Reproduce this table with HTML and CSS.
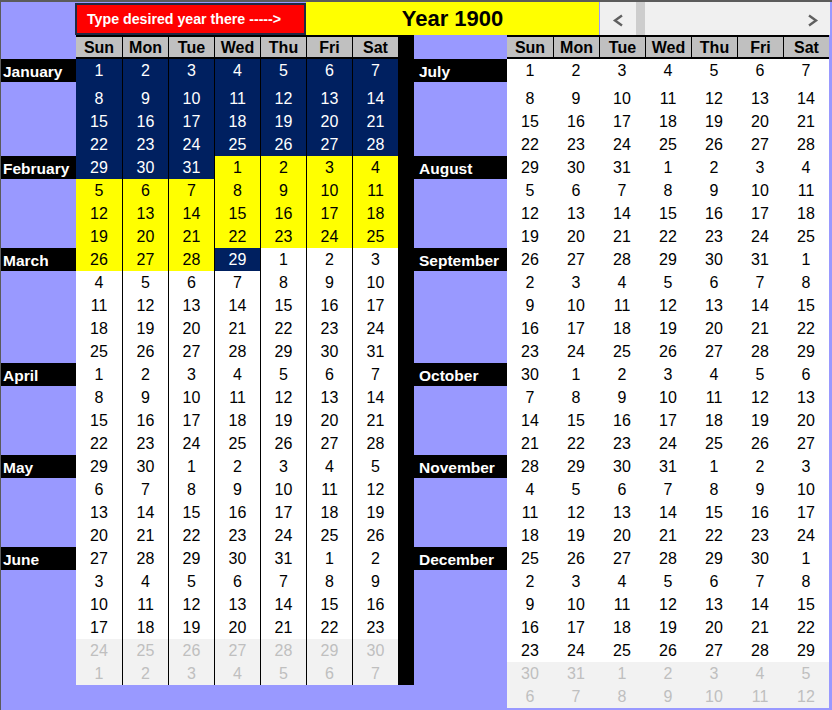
FILE: index.html
```html
<!DOCTYPE html>
<html>
<head>
<meta charset="utf-8">
<title>Year 1900</title>
<link rel="stylesheet" href="styles.css">
</head>
<body>
<div class="sheet">
  <div class="top">
    <div class="pad"></div>
    <div class="prompt">Type desired year there -----&gt;</div>
    <div class="year">Year 1900</div>
    <div class="scroll">
      <svg width="230" height="33" viewBox="0 0 230 33">
        <rect x="36" y="0" width="9" height="33" fill="#cdcdcd"/>
        <polyline points="22,13.5 15,18.5 22,23.5" fill="none" stroke="#606060" stroke-width="2.4"/>
        <polyline points="209,13.5 216,18.5 209,23.5" fill="none" stroke="#606060" stroke-width="2.4"/>
      </svg>
    </div>
  </div>
  <div class="main">
    <div class="half left">
      <div class="bar"></div>
      <div class="e"></div><div class="hd">Sun</div><div class="hd">Mon</div><div class="hd">Tue</div><div class="hd">Wed</div><div class="hd">Thu</div><div class="hd">Fri</div><div class="hd">Sat</div>
      <div class="mo">January</div><div class="d n">1</div><div class="d n">2</div><div class="d n">3</div><div class="d n">4</div><div class="d n">5</div><div class="d n">6</div><div class="d n">7</div>
      <div class="e"></div><div class="d n">8</div><div class="d n">9</div><div class="d n">10</div><div class="d n">11</div><div class="d n">12</div><div class="d n">13</div><div class="d n">14</div>
      <div class="e"></div><div class="d n">15</div><div class="d n">16</div><div class="d n">17</div><div class="d n">18</div><div class="d n">19</div><div class="d n">20</div><div class="d n">21</div>
      <div class="e"></div><div class="d n">22</div><div class="d n">23</div><div class="d n">24</div><div class="d n">25</div><div class="d n">26</div><div class="d n">27</div><div class="d n">28</div>
      <div class="mo">February</div><div class="d n">29</div><div class="d n">30</div><div class="d n">31</div><div class="d y">1</div><div class="d y">2</div><div class="d y">3</div><div class="d y">4</div>
      <div class="e"></div><div class="d y">5</div><div class="d y">6</div><div class="d y">7</div><div class="d y">8</div><div class="d y">9</div><div class="d y">10</div><div class="d y">11</div>
      <div class="e"></div><div class="d y">12</div><div class="d y">13</div><div class="d y">14</div><div class="d y">15</div><div class="d y">16</div><div class="d y">17</div><div class="d y">18</div>
      <div class="e"></div><div class="d y">19</div><div class="d y">20</div><div class="d y">21</div><div class="d y">22</div><div class="d y">23</div><div class="d y">24</div><div class="d y">25</div>
      <div class="mo">March</div><div class="d y">26</div><div class="d y">27</div><div class="d y">28</div><div class="d n">29</div><div class="d">1</div><div class="d">2</div><div class="d">3</div>
      <div class="e"></div><div class="d">4</div><div class="d">5</div><div class="d">6</div><div class="d">7</div><div class="d">8</div><div class="d">9</div><div class="d">10</div>
      <div class="e"></div><div class="d">11</div><div class="d">12</div><div class="d">13</div><div class="d">14</div><div class="d">15</div><div class="d">16</div><div class="d">17</div>
      <div class="e"></div><div class="d">18</div><div class="d">19</div><div class="d">20</div><div class="d">21</div><div class="d">22</div><div class="d">23</div><div class="d">24</div>
      <div class="e"></div><div class="d">25</div><div class="d">26</div><div class="d">27</div><div class="d">28</div><div class="d">29</div><div class="d">30</div><div class="d">31</div>
      <div class="mo">April</div><div class="d">1</div><div class="d">2</div><div class="d">3</div><div class="d">4</div><div class="d">5</div><div class="d">6</div><div class="d">7</div>
      <div class="e"></div><div class="d">8</div><div class="d">9</div><div class="d">10</div><div class="d">11</div><div class="d">12</div><div class="d">13</div><div class="d">14</div>
      <div class="e"></div><div class="d">15</div><div class="d">16</div><div class="d">17</div><div class="d">18</div><div class="d">19</div><div class="d">20</div><div class="d">21</div>
      <div class="e"></div><div class="d">22</div><div class="d">23</div><div class="d">24</div><div class="d">25</div><div class="d">26</div><div class="d">27</div><div class="d">28</div>
      <div class="mo">May</div><div class="d">29</div><div class="d">30</div><div class="d">1</div><div class="d">2</div><div class="d">3</div><div class="d">4</div><div class="d">5</div>
      <div class="e"></div><div class="d">6</div><div class="d">7</div><div class="d">8</div><div class="d">9</div><div class="d">10</div><div class="d">11</div><div class="d">12</div>
      <div class="e"></div><div class="d">13</div><div class="d">14</div><div class="d">15</div><div class="d">16</div><div class="d">17</div><div class="d">18</div><div class="d">19</div>
      <div class="e"></div><div class="d">20</div><div class="d">21</div><div class="d">22</div><div class="d">23</div><div class="d">24</div><div class="d">25</div><div class="d">26</div>
      <div class="mo">June</div><div class="d">27</div><div class="d">28</div><div class="d">29</div><div class="d">30</div><div class="d">31</div><div class="d">1</div><div class="d">2</div>
      <div class="e"></div><div class="d">3</div><div class="d">4</div><div class="d">5</div><div class="d">6</div><div class="d">7</div><div class="d">8</div><div class="d">9</div>
      <div class="e"></div><div class="d">10</div><div class="d">11</div><div class="d">12</div><div class="d">13</div><div class="d">14</div><div class="d">15</div><div class="d">16</div>
      <div class="e"></div><div class="d">17</div><div class="d">18</div><div class="d">19</div><div class="d">20</div><div class="d">21</div><div class="d">22</div><div class="d">23</div>
      <div class="e"></div><div class="d g">24</div><div class="d g">25</div><div class="d g">26</div><div class="d g">27</div><div class="d g">28</div><div class="d g">29</div><div class="d g">30</div>
      <div class="e"></div><div class="d g">1</div><div class="d g">2</div><div class="d g">3</div><div class="d g">4</div><div class="d g">5</div><div class="d g">6</div><div class="d g">7</div>
    </div>
    <div class="half right">
      <div class="e"></div><div class="hd">Sun</div><div class="hd">Mon</div><div class="hd">Tue</div><div class="hd">Wed</div><div class="hd">Thu</div><div class="hd">Fri</div><div class="hd">Sat</div>
      <div class="mo">July</div><div class="d">1</div><div class="d">2</div><div class="d">3</div><div class="d">4</div><div class="d">5</div><div class="d">6</div><div class="d">7</div>
      <div class="e"></div><div class="d">8</div><div class="d">9</div><div class="d">10</div><div class="d">11</div><div class="d">12</div><div class="d">13</div><div class="d">14</div>
      <div class="e"></div><div class="d">15</div><div class="d">16</div><div class="d">17</div><div class="d">18</div><div class="d">19</div><div class="d">20</div><div class="d">21</div>
      <div class="e"></div><div class="d">22</div><div class="d">23</div><div class="d">24</div><div class="d">25</div><div class="d">26</div><div class="d">27</div><div class="d">28</div>
      <div class="mo">August</div><div class="d">29</div><div class="d">30</div><div class="d">31</div><div class="d">1</div><div class="d">2</div><div class="d">3</div><div class="d">4</div>
      <div class="e"></div><div class="d">5</div><div class="d">6</div><div class="d">7</div><div class="d">8</div><div class="d">9</div><div class="d">10</div><div class="d">11</div>
      <div class="e"></div><div class="d">12</div><div class="d">13</div><div class="d">14</div><div class="d">15</div><div class="d">16</div><div class="d">17</div><div class="d">18</div>
      <div class="e"></div><div class="d">19</div><div class="d">20</div><div class="d">21</div><div class="d">22</div><div class="d">23</div><div class="d">24</div><div class="d">25</div>
      <div class="mo">September</div><div class="d">26</div><div class="d">27</div><div class="d">28</div><div class="d">29</div><div class="d">30</div><div class="d">31</div><div class="d">1</div>
      <div class="e"></div><div class="d">2</div><div class="d">3</div><div class="d">4</div><div class="d">5</div><div class="d">6</div><div class="d">7</div><div class="d">8</div>
      <div class="e"></div><div class="d">9</div><div class="d">10</div><div class="d">11</div><div class="d">12</div><div class="d">13</div><div class="d">14</div><div class="d">15</div>
      <div class="e"></div><div class="d">16</div><div class="d">17</div><div class="d">18</div><div class="d">19</div><div class="d">20</div><div class="d">21</div><div class="d">22</div>
      <div class="e"></div><div class="d">23</div><div class="d">24</div><div class="d">25</div><div class="d">26</div><div class="d">27</div><div class="d">28</div><div class="d">29</div>
      <div class="mo">October</div><div class="d">30</div><div class="d">1</div><div class="d">2</div><div class="d">3</div><div class="d">4</div><div class="d">5</div><div class="d">6</div>
      <div class="e"></div><div class="d">7</div><div class="d">8</div><div class="d">9</div><div class="d">10</div><div class="d">11</div><div class="d">12</div><div class="d">13</div>
      <div class="e"></div><div class="d">14</div><div class="d">15</div><div class="d">16</div><div class="d">17</div><div class="d">18</div><div class="d">19</div><div class="d">20</div>
      <div class="e"></div><div class="d">21</div><div class="d">22</div><div class="d">23</div><div class="d">24</div><div class="d">25</div><div class="d">26</div><div class="d">27</div>
      <div class="mo">November</div><div class="d">28</div><div class="d">29</div><div class="d">30</div><div class="d">31</div><div class="d">1</div><div class="d">2</div><div class="d">3</div>
      <div class="e"></div><div class="d">4</div><div class="d">5</div><div class="d">6</div><div class="d">7</div><div class="d">8</div><div class="d">9</div><div class="d">10</div>
      <div class="e"></div><div class="d">11</div><div class="d">12</div><div class="d">13</div><div class="d">14</div><div class="d">15</div><div class="d">16</div><div class="d">17</div>
      <div class="e"></div><div class="d">18</div><div class="d">19</div><div class="d">20</div><div class="d">21</div><div class="d">22</div><div class="d">23</div><div class="d">24</div>
      <div class="mo">December</div><div class="d">25</div><div class="d">26</div><div class="d">27</div><div class="d">28</div><div class="d">29</div><div class="d">30</div><div class="d">1</div>
      <div class="e"></div><div class="d">2</div><div class="d">3</div><div class="d">4</div><div class="d">5</div><div class="d">6</div><div class="d">7</div><div class="d">8</div>
      <div class="e"></div><div class="d">9</div><div class="d">10</div><div class="d">11</div><div class="d">12</div><div class="d">13</div><div class="d">14</div><div class="d">15</div>
      <div class="e"></div><div class="d">16</div><div class="d">17</div><div class="d">18</div><div class="d">19</div><div class="d">20</div><div class="d">21</div><div class="d">22</div>
      <div class="e"></div><div class="d">23</div><div class="d">24</div><div class="d">25</div><div class="d">26</div><div class="d">27</div><div class="d">28</div><div class="d">29</div>
      <div class="e"></div><div class="d g">30</div><div class="d g">31</div><div class="d g">1</div><div class="d g">2</div><div class="d g">3</div><div class="d g">4</div><div class="d g">5</div>
      <div class="e"></div><div class="d g">6</div><div class="d g">7</div><div class="d g">8</div><div class="d g">9</div><div class="d g">10</div><div class="d g">11</div><div class="d g">12</div>
    </div>
  </div>
</div>
</body>
</html>
```

FILE: styles.css
```css
* { box-sizing: border-box; }
html, body { margin: 0; padding: 0; }
html { background: #9999ff; }
body { font-family: "Liberation Sans", Arial, sans-serif; color: #000; }

.sheet {
  height: 710px;
  border-top: 2px solid #5b5b5b;
  border-left: 1px solid #5b5b5b;
  background: #9999ff;
  overflow: hidden;
}

.top { display: flex; height: 33px; }
.pad { width: 74px; flex: none; }
.prompt {
  flex: none;
  width: 231px;
  height: 32px;
  margin-top: 1px;
  border: 2px solid #1f2a44;
  background: #ff0000;
  color: #fff;
  font-weight: bold;
  font-size: 14.2px;
  display: flex;
  align-items: center;
  padding-left: 10px;
  white-space: nowrap;
}
.year {
  flex: none;
  width: 293px;
  background: #ffff00;
  display: flex;
  align-items: center;
  justify-content: center;
  font-weight: bold;
  font-size: 22px;
}
.scroll { flex: none; width: 230px; margin-left: 1px; background: #f0f0f0; }
.scroll svg { display: block; }

.main { display: flex; align-items: flex-start; }
.half { display: grid; }
.left {
  grid-template-columns: 75px repeat(7, 46px) 16px;
  grid-template-rows: 24px 23px 28px repeat(25, 23px);
}
.right {
  grid-template-columns: 93px repeat(7, 46px);
  grid-template-rows: 24px 23px 28px repeat(26, 23px);
}
.bar { grid-column: 9; grid-row: 1 / -1; background: #000; }

.hd {
  background: #c0c0c0;
  border-top: 2px solid #000;
  border-bottom: 2px solid #000;
  font-weight: bold;
  font-size: 16px;
  line-height: 22px;
  text-align: center;
}
.hd + .hd { border-left: 1px solid #000; }

.d {
  background: #fff;
  font-size: 16px;
  line-height: 22px;
  display: flex;
  align-items: flex-end;
  justify-content: center;
}
.left .d + .d { border-left: 1px solid #000; }
.n { background: #002060; color: #fff; }
.y { background: #ffff00; }
.g { background: #f2f2f2; color: #bfbfbf; }

.mo {
  background: #000;
  color: #fff;
  font-weight: bold;
  font-size: 15.5px;
  line-height: 21px;
  display: flex;
  align-items: flex-end;
  padding-left: 2px;
  white-space: nowrap;
}
.right .mo { padding-left: 5px; }
```
